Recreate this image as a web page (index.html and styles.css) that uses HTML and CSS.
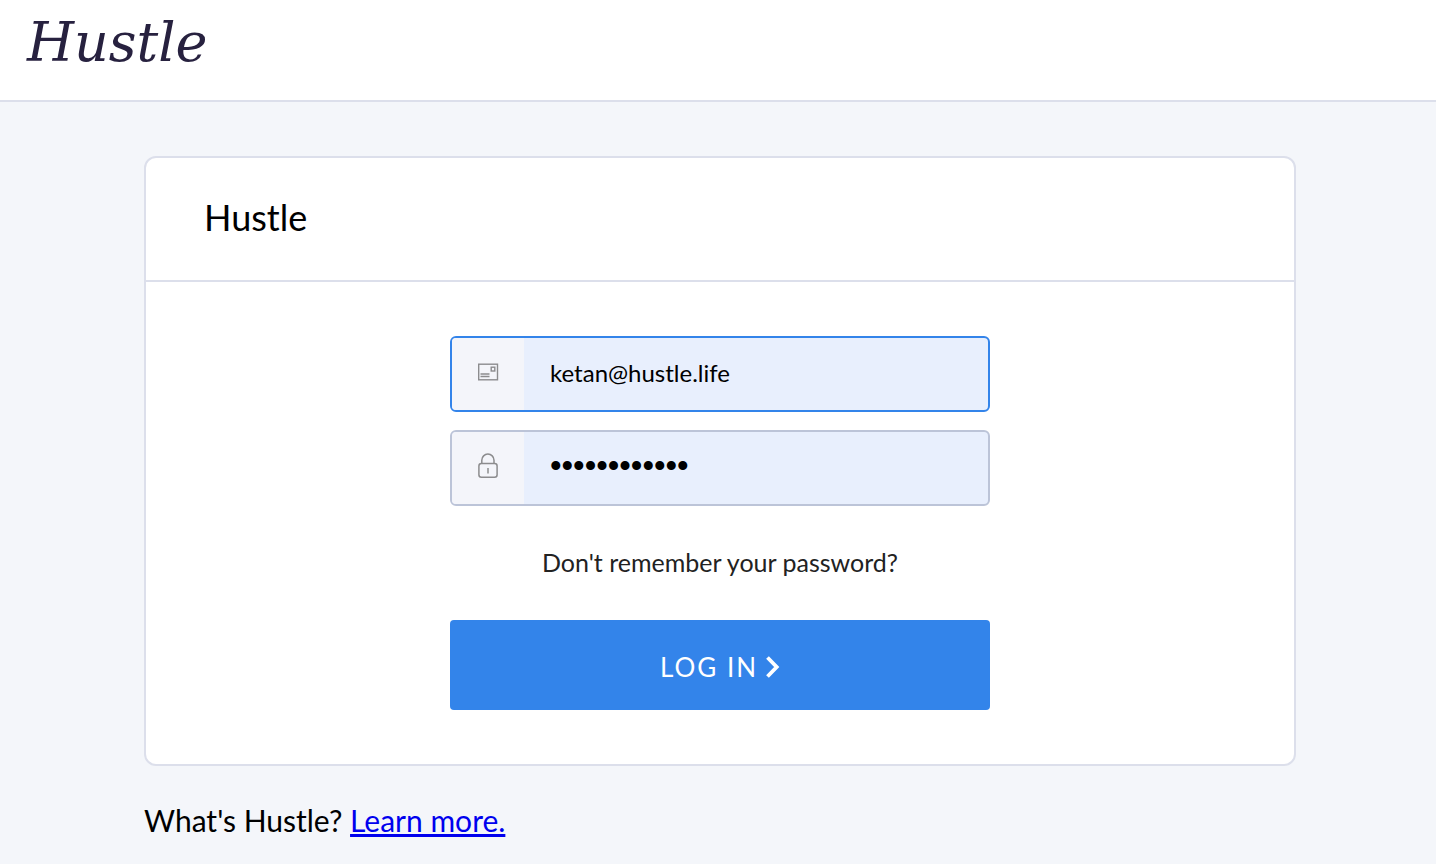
FILE: index.html
```
<!DOCTYPE html>
<html lang="en">
<head>
    <meta charset="UTF-8">
    <meta name="viewport" content="width=device-width, initial-scale=1.0">
    <title>Hustle</title>
    <link rel="stylesheet" href="styles.css">
</head>
<body>
    <header class="site-header">
        <span class="logo">Hustle</span>
    </header>
    <main class="content">
        <section class="card">
            <h1 class="card-title">Hustle</h1>
            <form class="login-form">
                <div class="field active">
                    <label class="field-icon" for="email" aria-label="Email">
                        <svg width="22" height="18" viewBox="0 0 22 18" fill="none" stroke="#8c8c8e" stroke-width="1.4">
                            <rect x="1.7" y="1.2" width="18.8" height="15.6"/>
                            <rect x="14.2" y="4.2" width="3.6" height="3.8"/>
                            <path d="M3.5 11h9M3.5 13.5h9"/>
                        </svg>
                    </label>
                    <input type="email" id="email" value="ketan@hustle.life">
                </div>
                <div class="field">
                    <label class="field-icon" for="password" aria-label="Password">
                        <svg width="22" height="26" viewBox="0 0 22 26" fill="none" stroke="#8c8c8e" stroke-width="1.5">
                            <rect x="1.9" y="10.5" width="18.2" height="13.8" rx="2.5"/>
                            <path d="M4.8 10.5V7.2a6.1 6.1 0 0 1 12.2 0v3.3M11 15v5.4"/>
                        </svg>
                    </label>
                    <input type="password" id="password" value="hustle123456">
                </div>
                <a class="forgot" href="#">Don't remember your password?</a>
                <button class="submit" type="submit">
                    LOG IN
                    <svg width="14" height="22" viewBox="0 0 14 22" fill="none" stroke="#fff" stroke-width="3.8">
                        <path d="M1.5 1.5l9.2 9.5-9.2 9.5"/>
                    </svg>
                </button>
            </form>
        </section>
        <p class="about">What's Hustle? <a href="#">Learn more.</a></p>
    </main>
</body>
</html>
```
FILE: styles.css
```
* {
    box-sizing: border-box;
}

body {
    margin: 0;
    background-color: #f4f6fa;
    color: #000;
    font-family: Lato, sans-serif;
}

.site-header {
    height: 102px;
    padding: 11px 27px;
    background-color: #fff;
    border-bottom: 2px solid #dcdfeb;
}

.logo {
    display: block;
    color: #27213f;
    font-family: "DejaVu Serif", serif;
    font-size: 54px;
    font-style: italic;
    line-height: 64px;
}

.content {
    padding: 54px 140px 0 144px;
}

.card {
    background-color: #fff;
    border: 2px solid #dcdfeb;
    border-radius: 12px;
}

.card-title {
    margin: 0;
    padding: 35px 58px 39px;
    border-bottom: 2px solid #dcdfeb;
    font-size: 36px;
    font-weight: 400;
    line-height: 48px;
}

.login-form {
    display: flex;
    flex-direction: column;
    gap: 18px;
    max-width: 540px;
    margin: 0 auto;
    padding: 54px 0;
}

.field {
    display: flex;
    height: 76px;
    overflow: hidden;
    background-color: #e8effd;
    border: 2px solid #bcc4d8;
    border-radius: 6px;
}

.field.active {
    border-color: #3384ea;
}

.field-icon {
    display: flex;
    align-items: center;
    justify-content: center;
    width: 72px;
    padding-bottom: 4px;
    background-color: #f4f5fa;
}

.field input {
    flex: 1;
    min-width: 0;
    padding: 0 26px 4px;
    border: none;
    outline: none;
    background: none;
    color: #000;
    font-family: inherit;
    font-size: 24px;
}

.field input[type="password"] {
    font-family: "Liberation Sans", Arial, sans-serif;
    font-size: 33px;
}

.forgot {
    align-self: center;
    padding: 22px 0 24px;
    color: #222;
    font-size: 25px;
    line-height: 32px;
    text-decoration: none;
}

.submit {
    display: flex;
    align-items: center;
    justify-content: center;
    gap: 8px;
    height: 90px;
    padding: 4px 0 0;
    border: none;
    border-radius: 4px;
    background-color: #3384ea;
    color: #fff;
    font-family: inherit;
    font-size: 26px;
    letter-spacing: 2px;
    cursor: pointer;
}

.about {
    margin: 36px 0 0;
    font-size: 30px;
    line-height: 36px;
}

.about a {
    color: #0000ee;
}
```
